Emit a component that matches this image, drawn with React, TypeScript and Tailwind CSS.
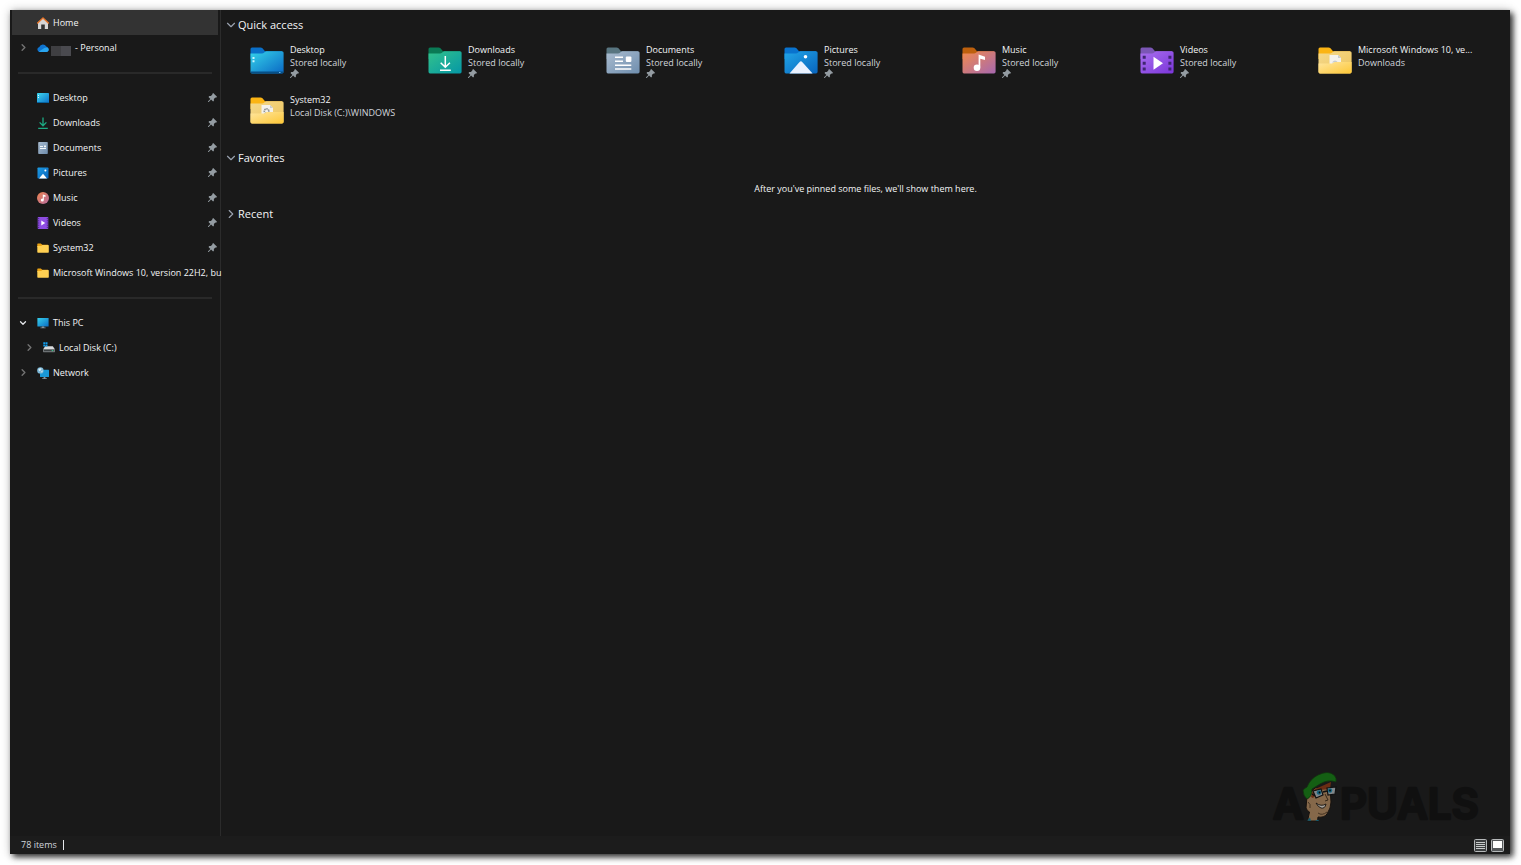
import { ReactNode } from 'react';
import { ChevronDown, ChevronRight } from 'lucide-react';

function PinIcon() {
  return (
    <svg viewBox="0 0 9 9" className="w-[9px] h-[9px] shrink-0" fill="#949ca2">
      <path d="M5.2 0 9 3.8 8.1 4.8 7.4 4.6 5.9 6.1 5.9 7.8 5.1 8.5 3.1 6.6 0.7 8.9 0 9 0.1 8.3 2.4 5.9 0.5 4 1.3 3.1 2.9 3.1 4.4 1.6 4.2 1Z" />
    </svg>
  );
}

function Gradient({ id, from, to }: { id: string; from: string; to: string }) {
  return (
    <linearGradient id={id} x1="0" y1="0" x2="1" y2="1">
      <stop offset="0" stopColor={from} />
      <stop offset="1" stopColor={to} />
    </linearGradient>
  );
}

type FolderProps = { id: string; tab: string; from: string; to: string; children?: ReactNode };

function Folder({ id, tab, from, to, children }: FolderProps) {
  return (
    <svg viewBox="0 0 34 27" className="w-[34px] h-[27px] shrink-0">
      <defs>
        <Gradient id={id} from={from} to={to} />
      </defs>
      <path d="M0.5 2Q0.5 0.5 2 0.5H10.5Q11.7 0.5 12.5 1.3L15 4.2H32V12H0.5Z" fill={tab} />
      <path d="M0.5 6.6H12Q13.2 6.6 14 5.8L14.8 5Q15.6 4.2 16.6 4.2H32Q33.6 4.2 33.6 5.8V24.8Q33.6 26.4 32 26.4H2Q0.5 26.4 0.5 24.8Z" fill={`url(#${id})`} />
      {children}
    </svg>
  );
}

const desktopFolder = (
  <Folder id="f-desktop" tab="#0a6fc8" from="#35d3ea" to="#0a68c4">
    <path d="M0.5 24.4H33.6V25Q33.6 26.4 32 26.4H2Q0.5 26.4 0.5 25Z" fill="#074f86" />
    <path d="M2.5 10h2v2h-2zM2.5 13.2h2v2h-2z" fill="#c9f6ff" />
    <path d="M29 25h1.5v1H29z" fill="#6eb7e6" />
  </Folder>
);

const downloadsFolder = (
  <Folder id="f-downloads" tab="#0a7a55" from="#33c28b" to="#0597a6">
    <path d="M17.3 9V20M12.7 15.7 17.3 20.2 21.9 15.7M12 23.3H22.8" stroke="#fff" strokeWidth="1.5" fill="none" />
  </Folder>
);

const documentsFolder = (
  <Folder id="f-documents" tab="#587580" from="#aabccf" to="#6f8eae">
    <path d="M9 10.2H17M9 14.2H17M9 18.2H25.3M9 22H25.3" stroke="#fff" strokeWidth="1.5" />
    <rect x="19.8" y="9.5" width="5.6" height="5.6" rx="1" fill="#fff" />
  </Folder>
);

const picturesFolder = (
  <Folder id="f-pictures" tab="#0973ce" from="#22a6e8" to="#0864bd">
    <path d="M5.5 26.4 15.6 14.9Q16.9 13.5 18.2 14.9L28.6 26.4Z" fill="#eaf2ff" />
    <circle cx="21.5" cy="9.7" r="1.8" fill="#fff" />
  </Folder>
);

const musicFolder = (
  <Folder id="f-music" tab="#bd600d" from="#f28b4b" to="#a768b0">
    <path d="M16.6 7.6 23 9.8V13L18.3 11.8V20.4H16.6Z" fill="#fff" />
    <circle cx="15" cy="20.7" r="3.3" fill="#fff" />
  </Folder>
);

const videosFolder = (
  <Folder id="f-videos" tab="#7b56b5" from="#a970ee" to="#7b35da">
    <path d="M13.5 9.7 23 16.2 13.5 22.7Z" fill="#fff" />
    <path
      d="M2.7 8.8h3v3h-3zM2.7 14.7h3v3h-3zM2.7 20.6h3v3h-3zM28.4 8.8h3v3h-3zM28.4 14.7h3v3h-3zM28.4 20.6h3v3h-3z"
      fill="#3f2670"
    />
  </Folder>
);

function YellowFolder({ id, gear }: { id: string; gear?: boolean }) {
  return (
    <Folder id={id} tab="#fbb414" from="#f5d98c" to="#edc45b">
      <path d="M11.5 8H20L23 11V20H11.5Z" fill="#f4f2ec" />
      <path d="M20 8V11H23Z" fill="#c9cdd0" />
      {gear && <circle cx="16.6" cy="14.2" r="2.3" fill="none" stroke="#8d9193" strokeWidth="1.6" strokeDasharray="1.3 0.6" />}
      {!gear && <path d="M14 15.5Q17 11.5 20 15.5Z" fill="#c4cbd2" />}
      <defs>
        <Gradient id={`${id}-front`} from="#ffe6a0" to="#fdc736" />
      </defs>
      <path d="M0.5 16.6H14L16.6 14.9H33.6V24.8Q33.6 26.4 32 26.4H2Q0.5 26.4 0.5 24.8Z" fill={`url(#${id}-front)`} />
    </Folder>
  );
}

function SmallIcon({ children }: { children: ReactNode }) {
  return (
    <svg viewBox="0 0 12 12" className="w-3 h-3 shrink-0">
      {children}
    </svg>
  );
}

const homeIcon = (
  <SmallIcon>
    <path d="M1 5.5 6 1.2 11 5.5V12H7.8V7.6H4.2V12H1Z" fill="#d5d5d5" />
    <path d="M0.6 6 6 1 11.4 6" fill="none" stroke="#e9772b" strokeWidth="1.4" strokeLinecap="round" strokeLinejoin="round" />
  </SmallIcon>
);

const cloudIcon = (
  <SmallIcon>
    <path d="M2.7 10A2.6 2.6 0 0 1 2.3 4.9 3.9 3.9 0 0 1 9.3 4.6 2.8 2.8 0 0 1 9.4 10Z" fill="#0f74d0" />
    <path d="M2 9.6 7.3 6Q9 5.2 10.7 5.8 12.4 7 11.5 8.8 10.8 10 9.4 10H2.7Z" fill="#29a5ef" />
  </SmallIcon>
);

const desktopIcon = (
  <SmallIcon>
    <defs>
      <Gradient id="s-desktop" from="#3fd8ef" to="#0b70c9" />
    </defs>
    <rect x="0" y="1" width="12" height="10" rx="0.7" fill="url(#s-desktop)" />
    <path d="M1 3h1v1H1zM1 5h1v1H1z" fill="#d3f9ff" />
    <path d="M0 10h12v1H0z" fill="#08639f" />
  </SmallIcon>
);

const downloadsIcon = (
  <SmallIcon>
    <path d="M6 0.5V8.6M2.6 5.4 6 8.8 9.4 5.4M1.2 11.3H10.8" stroke="#1dab84" strokeWidth="1.3" fill="none" />
  </SmallIcon>
);

const documentsIcon = (
  <SmallIcon>
    <defs>
      <Gradient id="s-documents" from="#a8bbcf" to="#6d8bab" />
    </defs>
    <rect x="1.2" y="0" width="9.6" height="12" rx="0.8" fill="url(#s-documents)" />
    <path d="M3 4.5H6M3 6.5H9" stroke="#f3f7fa" strokeWidth="1" />
    <path d="M7 3.6h2v1.6H7z" fill="#f3f7fa" />
  </SmallIcon>
);

const picturesIcon = (
  <SmallIcon>
    <defs>
      <Gradient id="s-pictures" from="#1c9ce4" to="#0864bd" />
    </defs>
    <rect x="0.5" y="0.5" width="11" height="11" rx="0.8" fill="url(#s-pictures)" />
    <path d="M2 11.5 6 6.7 10 11.5Z" fill="#fff" />
    <circle cx="8.4" cy="3.4" r="1" fill="#fff" />
  </SmallIcon>
);

const musicIcon = (
  <SmallIcon>
    <defs>
      <Gradient id="s-music" from="#ef8550" to="#b46a9e" />
    </defs>
    <circle cx="6" cy="6" r="6" fill="url(#s-music)" />
    <path d="M5.8 2.4 8.5 3.3V4.9L6.8 4.4V7.8H5.8Z" fill="#fff" />
    <circle cx="5.3" cy="7.9" r="1.5" fill="#fff" />
  </SmallIcon>
);

const videosIcon = (
  <SmallIcon>
    <rect x="0.7" y="0" width="10.6" height="12" rx="0.8" fill="#8e4de2" />
    <path d="M4.3 3.5 8.2 6 4.3 8.5Z" fill="#fff" />
    <path d="M1.7 1V11M10.3 1V11" stroke="#482580" strokeWidth="1" strokeDasharray="1.2 1" />
  </SmallIcon>
);

function SmallFolder() {
  return (
    <SmallIcon>
      <path d="M0.3 2Q0.3 1.4 1 1.4H3.8L5.3 2.8H11V5H0.3Z" fill="#eba314" />
      <path d="M0.3 4H4.2L5.3 2.9H11.2Q11.8 2.9 11.8 3.5V10Q11.8 10.7 11.2 10.7H1Q0.3 10.7 0.3 10Z" fill="#ffd052" />
    </SmallIcon>
  );
}

const pcIcon = (
  <SmallIcon>
    <defs>
      <Gradient id="s-pc" from="#36cfeb" to="#0b6fc7" />
    </defs>
    <rect x="0.4" y="1" width="11.2" height="8.4" rx="0.5" fill="url(#s-pc)" />
    <path d="M4.8 9.4H7.2V10.4H8.6V11.2H3.4V10.4H4.8Z" fill="#84919a" />
  </SmallIcon>
);

const diskIcon = (
  <SmallIcon>
    <path d="M2.2 4.3H9.8L12 7.4H0Z" fill="#d9dbdd" />
    <rect x="0" y="7.2" width="12" height="3" rx="0.6" fill="#72777a" />
    <path d="M1 8.6H11" stroke="#303436" strokeWidth="0.9" />
    <path d="M8.7 8.2h1.6v0.9H8.7z" fill="#3ed695" />
    <path d="M0.3 0.2h1.9v1.9H0.3zM2.6 0.2h1.9v1.9H2.6zM0.3 2.5h1.9v1.9H0.3zM2.6 2.5h1.9v1.9H2.6z" fill="#129eec" />
  </SmallIcon>
);

const networkIcon = (
  <SmallIcon>
    <rect x="3" y="2.8" width="9" height="7.2" rx="0.5" fill="#1998d8" />
    <path d="M6.6 10H8.4V11.2H9.8V12H5.2V11.2H6.6Z" fill="#8795a0" />
    <circle cx="3.4" cy="3.4" r="3.2" fill="#7cb8d8" />
    <path d="M1.4 2.2Q3 0.6 4.6 1.4L4 3.2 2.2 4.2ZM4.2 4.2 6 3.6 4.8 5.8Z" fill="#d8eef8" />
  </SmallIcon>
);

const pinnedItems = [
  { label: 'Desktop', icon: desktopIcon, pinned: true },
  { label: 'Downloads', icon: downloadsIcon, pinned: true },
  { label: 'Documents', icon: documentsIcon, pinned: true },
  { label: 'Pictures', icon: picturesIcon, pinned: true },
  { label: 'Music', icon: musicIcon, pinned: true },
  { label: 'Videos', icon: videosIcon, pinned: true },
  { label: 'System32', icon: <SmallFolder />, pinned: true },
  { label: 'Microsoft Windows 10, version 22H2, bu', icon: <SmallFolder />, pinned: false }
];

const tiles = [
  { name: 'Desktop', location: 'Stored locally', icon: desktopFolder, pinned: true },
  { name: 'Downloads', location: 'Stored locally', icon: downloadsFolder, pinned: true },
  { name: 'Documents', location: 'Stored locally', icon: documentsFolder, pinned: true },
  { name: 'Pictures', location: 'Stored locally', icon: picturesFolder, pinned: true },
  { name: 'Music', location: 'Stored locally', icon: musicFolder, pinned: true },
  { name: 'Videos', location: 'Stored locally', icon: videosFolder, pinned: true },
  { name: 'Microsoft Windows 10, ve...', location: 'Downloads', icon: <YellowFolder id="f-iso" />, pinned: false },
  { name: 'System32', location: 'Local Disk (C:)\\WINDOWS', icon: <YellowFolder id="f-system" gear />, pinned: false }
];

type NavItemProps = {
  label: ReactNode;
  icon: ReactNode;
  chevron?: 'open' | 'closed';
  pinned?: boolean;
  active?: boolean;
  nested?: boolean;
};

function NavItem({ label, icon, chevron, pinned, active, nested }: NavItemProps) {
  return (
    <button
      className={`flex items-center w-full h-[25px] pr-px text-left ${nested ? 'pl-3' : 'pl-1.5'} ${active ? 'bg-[#333333]' : ''}`}
    >
      <span className="w-[19px] shrink-0">
        {chevron === 'open' && <ChevronDown size={10} strokeWidth={3} className="text-gray-200" />}
        {chevron === 'closed' && <ChevronRight size={11} strokeWidth={3} className="text-neutral-500" />}
      </span>
      {icon}
      <span className="flex-1 flex items-center min-w-0 ml-1 whitespace-nowrap">{label}</span>
      {pinned && <PinIcon />}
    </button>
  );
}

function Separator() {
  return (
    <div className="flex items-center h-[25px] px-1.5">
      <hr className="w-full border-t-2 border-[#292929]" />
    </div>
  );
}

function SectionHeading({ title, open }: { title: string; open: boolean }) {
  return (
    <h2>
      <button aria-expanded={open} className="flex items-center h-5 pl-[3px] text-[11px] text-gray-100">
        {open ? (
          <ChevronDown size={14} strokeWidth={2} className="text-gray-400" />
        ) : (
          <ChevronRight size={14} strokeWidth={2} className="text-gray-400" />
        )}
        {title}
      </button>
    </h2>
  );
}

function Watermark() {
  return (
    <svg viewBox="0 0 216 70" className="absolute right-6 bottom-3.5 w-[216px] h-[70px] pointer-events-none">
      <g
        fill="#101010"
        stroke="#101010"
        strokeWidth="2.5"
        strokeLinejoin="round"
        fontFamily="Inter, sans-serif"
        fontWeight="600"
        fontSize="42"
      >
        <text x="3" y="49">A</text>
        <text x="70" y="49">PUALS</text>
      </g>
      <path d="M37 26 36 38Q37 41 39.500 42L37.500 51H47.500L48 47Q54 48 57 44 61 38 61 32L60 17 45 18Z" fill="#85684a" stroke="#17120e" strokeWidth="1" />
      <path d="M37 50.500 40 47.500 41 51ZM45 51 48 49.500 49 51Z" fill="#125b70" />
      <path d="M41 27 43 20 61 12 60 19 50 20 43 28Z" fill="#6b2d13" />
      <path d="M33 20Q35 18 37 17 40 9 48 5 58 0 64 5 67 8 66 12 58 9 50 14L42 19Q42 27 37 29 33 26 33 20Z" fill="#145f13" stroke="#12310f" strokeWidth="0.800" />
      <path d="M43 21 51 19 53 25 46 28ZM57 18 66 17 65 24 58 25Z" fill="#81878a" stroke="#111" strokeWidth="1.200" />
      <path d="M42 24 45 26M53 22 57 21" stroke="#111" strokeWidth="1.400" />
      <circle cx="49" cy="22.500" r="2.300" fill="#176782" />
      <circle cx="60" cy="20.500" r="2.200" fill="#176782" />
      <circle cx="49.500" cy="22.500" r="0.900" fill="#0b0b0b" />
      <circle cx="60" cy="20.500" r="0.900" fill="#0b0b0b" />
      <path d="M55 24 58 30 55 31" fill="none" stroke="#352718" strokeWidth="1" />
      <path d="M46 33Q51 37 56 34 55 39 51 38 48 37 46 33Z" fill="#a5a19b" stroke="#191411" strokeWidth="0.900" />
      <path d="M48 43Q52 46 57 42M38 32Q41 34 40 38" fill="none" stroke="#3c2d1d" strokeWidth="0.900" />
    </svg>
  );
}

export default function App() {
  return (
    <div className="min-h-screen flex bg-white pl-2.5 pt-2.5 pr-[11px] pb-[11px] font-['Open_Sans','Noto_Sans',sans-serif]">
      <div className="relative flex-1 flex flex-col min-w-0 bg-[#191919] text-gray-100 text-[9px] shadow-[3px_3px_6px_rgba(0,0,0,0.8),0_0_10px_rgba(0,0,0,0.2)]">
        <div className="flex-1 flex min-h-0">
          {/* Navigation pane */}
          <nav className="w-[211px] shrink-0 px-0.5 border-r border-[#2b2b2b]">
            <NavItem label="Home" icon={homeIcon} active />
            <NavItem
              icon={cloudIcon}
              chevron="closed"
              label={
                <>
                  <span className="flex -ml-0.5 mr-1 mt-1.5">
                    <span className="w-2.5 h-2.5 bg-[#3f3f42]" />
                    <span className="w-2.5 h-2.5 bg-[#4a4a4f]" />
                  </span>
                  - Personal
                </>
              }
            />
            <Separator />
            {pinnedItems.map((item) => (
              <NavItem key={item.label} label={item.label} icon={item.icon} pinned={item.pinned} />
            ))}
            <Separator />
            <NavItem label="This PC" icon={pcIcon} chevron="open" />
            <NavItem label="Local Disk (C:)" icon={diskIcon} chevron="closed" nested />
            <NavItem label="Network" icon={networkIcon} chevron="closed" />
          </nav>

          {/* Content */}
          <main className="flex-1 min-w-0 pt-[5px]">
            <SectionHeading title="Quick access" open />
            <div className="grid grid-cols-7 pl-[29px] pr-3.5 pt-2">
              {tiles.map((tile) => (
                <button key={tile.name} className="flex items-start gap-1.5 h-[50px] text-left whitespace-nowrap">
                  <span className="pt-1">{tile.icon}</span>
                  <span className="flex flex-col leading-[13px]">
                    <span>{tile.name}</span>
                    <span className="text-gray-300">{tile.location}</span>
                    {tile.pinned && <PinIcon />}
                  </span>
                </button>
              ))}
            </div>
            <div className="pt-[5px]">
              <SectionHeading title="Favorites" open />
            </div>
            <p className="pt-[17px] pb-[11px] text-center leading-[8px]">After you've pinned some files, we'll show them here.</p>
            <SectionHeading title="Recent" open={false} />
          </main>
        </div>

        {/* Status bar */}
        <footer className="flex items-center justify-between h-[18px] pl-[11px] pr-1.5 bg-[#1c1c1c]">
          <div className="flex items-center gap-1.5">
            <span className="text-gray-300">78 items</span>
            <span className="w-px h-2.5 bg-gray-200" />
          </div>
          <div className="flex gap-1">
            <button aria-label="Details view">
              <svg viewBox="0 0 13 13" className="w-[13px] h-[13px]">
                <rect x="0.500" y="0.500" width="12" height="12" rx="1" fill="#3c3f40" stroke="#b6b9ba" />
                <path d="M2 3.500H11M2 5.500H11M2 7.500H11M2 9.500H11" stroke="#c9cccc" strokeWidth="1" />
              </svg>
            </button>
            <button aria-label="Large icons view">
              <svg viewBox="0 0 13 13" className="w-[13px] h-[13px]">
                <rect x="0.500" y="0.500" width="12" height="12" rx="1" fill="#55585a" stroke="#b6b9ba" />
                <rect x="2" y="2" width="9" height="7" fill="#ffffff" />
              </svg>
            </button>
          </div>
        </footer>

        <Watermark />
      </div>
    </div>
  );
}
